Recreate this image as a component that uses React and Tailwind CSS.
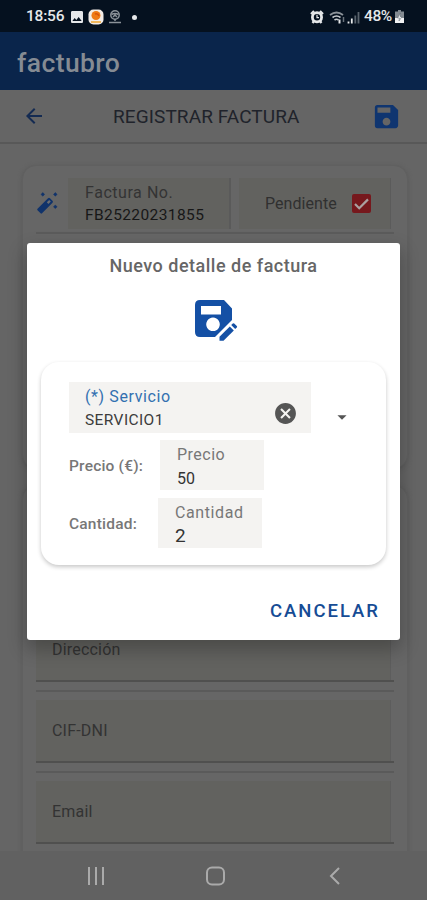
import React from "react";
import { MdSave, MdArrowBack, MdImage, MdArrowDropDown, MdCancel } from "react-icons/md";

const StatusBar = () => (
  <div className="flex h-8 shrink-0 items-center bg-[#05111f] pl-[26px] pr-[23px] pt-[2px] text-[#e6e8ea]">
    <span className="w-[39px] whitespace-nowrap text-[15.5px] font-medium leading-none tracking-[-0.2px]">18:56</span>
    <MdImage size={16} className="ml-1" />
    {/* app notification */}
    <svg width="16" height="16" viewBox="0 0 16 16" className="ml-[3px]">
      <rect x="0.5" y="0.5" width="15" height="15" rx="5" fill="#f4ede7" />
      <circle cx="8" cy="6.5" r="4.5" fill="#ee7a16" />
      <path d="M7 5q3-1 4 2" stroke="#d9540b" strokeWidth="1.5" fill="none" />
      <path d="M3 13h10" stroke="#f0b14c" strokeWidth="1.8" />
    </svg>
    <svg width="14" height="14" viewBox="0 0 14 14" className="ml-[4px]" fill="none" stroke="#8b9299" strokeWidth="1.5">
      <circle cx="7" cy="5" r="4.2" />
      <path d="M3.5 4.500q3.500-2 7 0M5 7l2-2 2 2M7 9v2M1 12.500h12" />
    </svg>
    <span className="ml-[10px] h-[5px] w-[5px] rounded-full bg-[#e6e8ea]" />
    <div className="ml-auto flex items-center">
      <svg width="14" height="14" viewBox="0 0 14 14">
        <path d="M1 4L4 1M13 4L10 1M2.5 13L4 11M11.5 13L10 11" stroke="#e6e8ea" strokeWidth="2.2" />
        <circle cx="7" cy="7.2" r="4.600" fill="#05111f" stroke="#e6e8ea" strokeWidth="2.800" />
        <path d="M7 4.8v2.800h2" stroke="#e6e8ea" strokeWidth="1.2" fill="none" />
      </svg>
      <svg width="16" height="13" viewBox="0 0 16 13" className="ml-[5px]" fill="none">
        <path d="M1 4q6.500-5 13 0" stroke="#8b9299" strokeWidth="1.8" />
        <path d="M3.500 6.500q4-3 8 0M5.500 9q2-1.500 4 0" stroke="#c4c8cc" strokeWidth="1.6" />
        <path d="M10.500 12.500v-4" stroke="#e6e8ea" strokeWidth="2" />
        <path d="M14.500 11v-5" stroke="#69727b" strokeWidth="1.500" />
      </svg>
      <svg width="13" height="13" viewBox="0 0 13 13" className="ml-[2px]">
        <path d="M1.500 12.500v-2M4.800 12.500v-5" stroke="#e6e8ea" strokeWidth="1.800" />
        <path d="M8.300 12.500v-8M11.500 12.500V1" stroke="#59636d" strokeWidth="1.800" />
      </svg>
      <span className="ml-1 w-[31px] whitespace-nowrap text-[15.500px] font-medium leading-none tracking-[-0.4px]">48%</span>
      <svg width="9" height="14" viewBox="0 0 9 14">
        <path d="M3 0h3v1.500h3V13H0V1.500h3z" fill="#848b92" />
        <path d="M0 8h9v5H0z" fill="#f1f2f3" />
        <path d="M5.500 3L2.500 8h2L4 11l3-4.500H5z" fill="#f1f2f3" stroke="#59636d" strokeWidth="0.5" />
      </svg>
    </div>
  </div>
);

const WandIcon = () => (
  <svg width="24" height="24" viewBox="0 0 24 24" fill="#10336b">
    <path d="M1.500 17.800L12 7.300q1-1 2 0l2.500 2.500q1 1 0 2L6 22.300q-.7.700-1.400 0l-3.100-3.100q-.7-.7 0-1.400z" />
    <path d="M10.800 11.300l2.400-2.300 1.600 1.600-2.400 2.300z" fill="#686c72" />
    <path d="M6.700 1.600l1.900 1.700-1.700 1.900L5 3.500zM19.200 1.600l1.900 1.700-1.700 1.900-1.900-1.700zM19.200 14l1.900 1.700-1.700 1.900-1.900-1.700z" stroke="#10336b" strokeWidth="0.500" />
  </svg>
);

const SaveEditIcon = () => (
  <svg width="44" height="44" viewBox="0 0 44 44">
    <path
      fillRule="evenodd"
      d="M6 1h24l8 8.500v11.500L21 38H6q-5 0-5-5V6q0-5 5-5zM7 7v8.500h20V7zM19 18.500a6.800 6.800 0 1 0 .01 0z"
      fill="#1450a5"
    />
    <path d="M25.500 37.800L35.800 27.500l4 4L29.500 41.800h-4z" fill="#1450a5" />
    <path d="M37.200 26.100l1.600-1.600q.7-.7 1.400 0l2.600 2.600q.7.700 0 1.400l-1.600 1.600z" fill="#1450a5" />
  </svg>
);

const FormField = ({ label }) => (
  <div className="mb-2 border-b-2 border-[#50504f]">
    <div className="mr-[3px] flex h-[61px] items-center border-r border-[#5d5d5d] bg-[#62625f] pl-4 text-[16px] leading-none tracking-[0.2px] text-[#333333]">
      {label}
    </div>
  </div>
);

const InvoiceForm = () => (
  <div className="flex h-[707px] shrink-0 flex-col gap-4 overflow-hidden pl-[22px] pr-[19px] pt-[21px]">
    <div className="h-[304px] shrink-0 rounded-[14px] border border-[#606060] bg-[#666666] px-[13px] pt-3 shadow-[0_1px_4px_#5a5a5a]">
      <div className="flex h-[56px] border-b-2 border-[#5b5b5b]">
        <div className="w-8 pt-[13px]"><WandIcon /></div>
        <div className="h-[51px] w-[163px] border-r-2 border-[#5a5a5a] bg-[#62625f] pl-[17px] pt-[5px]">
          <div className="whitespace-nowrap text-[16px] leading-[19px] tracking-[0.55px] text-[#343434]">Factura No.</div>
          <div className="mt-1 whitespace-nowrap text-[15.5px] leading-[18px] tracking-[0.4px] text-[#171717]">FB25220231855</div>
        </div>
        <div className="ml-2 flex h-[51px] w-[152px] items-center border-r border-[#5b5b5b] bg-[#62625f] pl-[26px]">
          <span className="w-[87px] whitespace-nowrap text-[16px] tracking-[0.05px] text-[#303030]">Pendiente</span>
          <span className="flex h-[19px] w-[19px] items-center justify-center rounded-[2px] bg-[#76181d]">
            <svg width="15" height="12" viewBox="0 0 15 12" fill="none" stroke="#aaa0a0" strokeWidth="2.2">
              <path d="M1 6l4.200 4.200L14 1.400" />
            </svg>
          </span>
        </div>
      </div>
    </div>
    <div className="h-[400px] shrink-0 rounded-t-[14px] border border-[#606060] bg-[#666666] px-[13px] pt-[133px] shadow-[0_1px_4px_#5a5a5a]">
      <FormField label="Dirección" />
      <div className="mb-2 h-[2px] bg-[#5a5a5a]" />
      <FormField label="CIF-DNI" />
      <div className="mb-2 h-[2px] bg-[#5a5a5a]" />
      <FormField label="Email" />
    </div>
  </div>
);

const NavBar = () => (
  <div className="flex h-[49px] shrink-0 items-center justify-between bg-[#616161] pl-[87px] pr-[86px] text-[#aaaaaa]">
    <svg width="18" height="20" viewBox="0 0 18 20" stroke="currentColor" strokeWidth="2">
      <path d="M2 1v18M9 1v18M16 1v18" />
    </svg>
    <svg width="21" height="20" viewBox="0 0 21 20" fill="none" stroke="currentColor" strokeWidth="2">
      <rect x="1" y="1.500" width="17" height="17" rx="5" />
    </svg>
    <svg width="14" height="20" viewBox="0 0 14 20" fill="none" stroke="currentColor" strokeWidth="2">
      <path d="M12 2L4 10l8 8" />
    </svg>
  </div>
);

const DetailDialog = () => (
  <div className="absolute left-[27px] top-[243px] flex h-[397px] w-[373px] flex-col rounded-[3px] bg-white shadow-[0_8px_18px_2px_rgba(0,0,0,0.24)]">
    <h2 className="mt-3 whitespace-nowrap text-center text-[18px] font-medium leading-[22px] tracking-[0.5px] text-[#666666]">
      Nuevo detalle de factura
    </h2>
    <button className="ml-[167px] mt-[22px] h-[44px] w-[44px]" aria-label="Guardar">
      <SaveEditIcon />
    </button>
    <div className="mx-[14px] mt-[19px] h-[203px] rounded-[18px] bg-white pl-7 pt-[20px] shadow-[0_2px_4px_rgba(0,0,0,0.22)]">
      <div className="flex items-center">
        <div className="flex h-[51px] w-[242px] justify-between bg-[#f4f3f1] pl-4 pr-[13px] pt-[5px]">
          <div>
            <div className="whitespace-nowrap text-[16px] leading-[20px] tracking-[0.6px] text-[#3270b0]">(*) Servicio</div>
            <div className="mt-1 whitespace-nowrap text-[15.500px] leading-[19px] tracking-[0.4px] text-[#3c3c3c]">SERVICIO1</div>
          </div>
          <MdCancel size={25} className="mt-[14px] text-[#555555]" />
        </div>
        <MdArrowDropDown size={22} className="ml-5 mt-[18px] text-[#555555]" />
      </div>
      <div className="mt-[7px] flex items-center">
        <span className="w-[91px] whitespace-nowrap pt-[3px] text-[15.500px] font-medium tracking-[0.2px] text-[#777777]">Precio (€):</span>
        <div className="h-[50px] w-[104px] bg-[#f4f3f1] pl-[17px] pt-[5px]">
          <div className="whitespace-nowrap text-[16px] leading-[20px] tracking-[0.5px] text-[#777777]">Precio</div>
          <div className="mt-1 text-[16px] leading-[19px] text-[#333333]">50</div>
        </div>
      </div>
      <div className="mt-2 flex items-center">
        <span className="w-[89px] whitespace-nowrap pt-[3px] text-[15.500px] font-medium tracking-[0.2px] text-[#777777]">Cantidad:</span>
        <div className="h-[50px] w-[104px] bg-[#f4f3f1] pl-[17px] pt-[5px]">
          <div className="whitespace-nowrap text-[16px] leading-[20px] tracking-[0.6px] text-[#777777]">Cantidad</div>
          <div className="mt-[3px] text-[19px] leading-[19px] text-[#333333]">2</div>
        </div>
      </div>
    </div>
    <button className="mr-5 mt-[34px] self-end whitespace-nowrap text-[18.500px] font-medium leading-[24px] tracking-[2px] text-[#164c95]">
      CANCELAR
    </button>
  </div>
);

export default function App() {
  return (
    <div className="relative flex h-[900px] w-full flex-col overflow-hidden bg-[#656565] font-['Roboto',sans-serif]">
      <StatusBar />
      <div className="flex h-[58px] shrink-0 items-center bg-[#0a254b] pl-[17px] pt-1 text-[26.500px] font-medium tracking-[0.4px] text-[#858b93]">
        factubro
      </div>
      <div className="flex h-[54px] shrink-0 items-center border-b-2 border-[#585858] pl-[22px] pr-[25px]">
        <MdArrowBack size={24} className="text-[#142b52]" />
        <h1 className="ml-[67px] whitespace-nowrap pt-px text-[19px] leading-none tracking-[0.1px] text-[#20232b]">REGISTRAR FACTURA</h1>
        <MdSave size={31} className="ml-auto text-[#0f3570]" />
      </div>
      <InvoiceForm />
      <NavBar />
      <DetailDialog />
    </div>
  );
}
